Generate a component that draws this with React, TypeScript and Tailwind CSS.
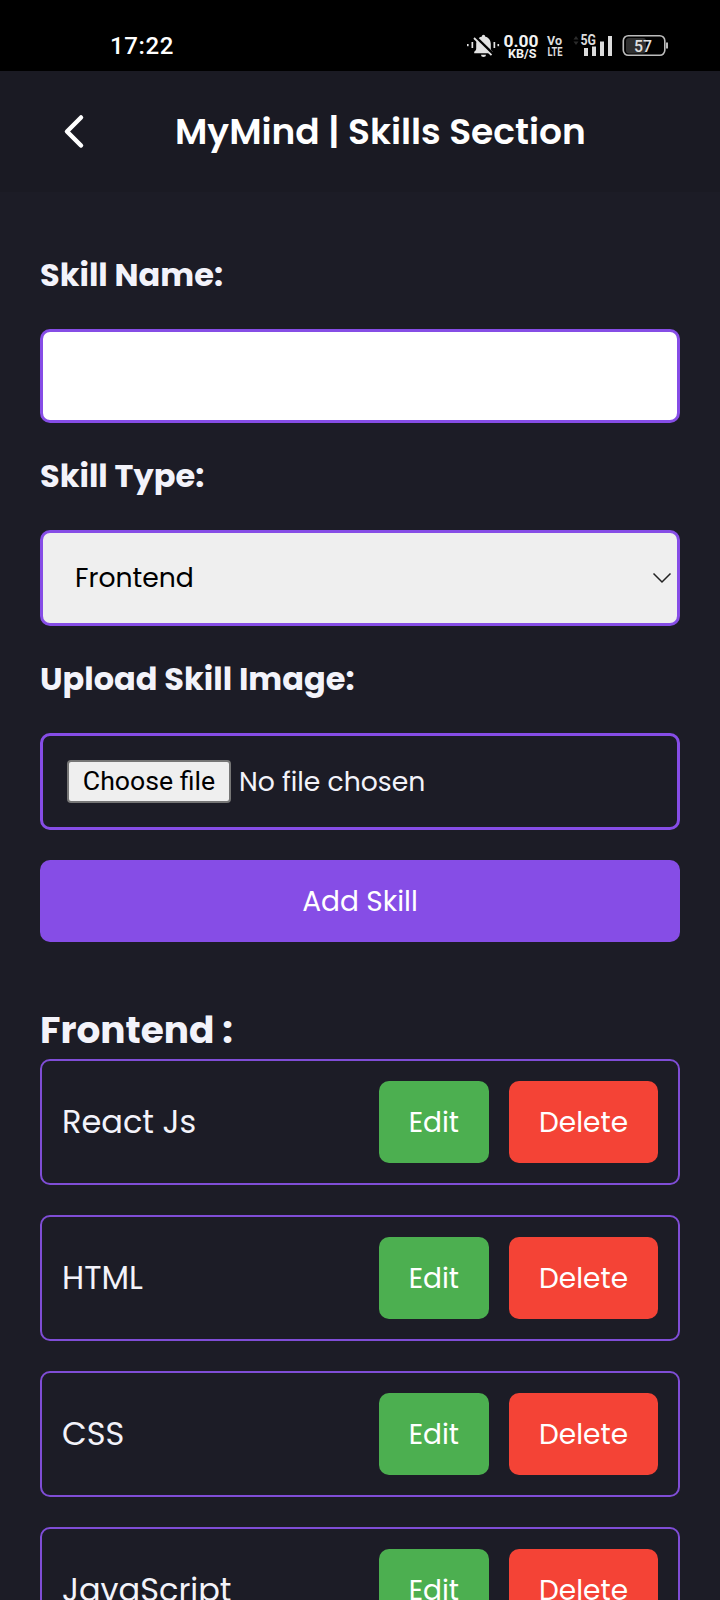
import React from "react";

const skills = ["React Js", "HTML", "CSS", "JavaScript"];

function StatusBar() {
  return (
    <header className="flex h-[71px] shrink-0 items-start justify-between bg-black pl-[110px] pr-[50px] pt-[33px] font-['Roboto',sans-serif]">
      <span className="text-[24px] font-medium leading-[26px] tracking-[0.6px] text-white">17:22</span>
      <svg width="208" height="30" viewBox="462 33 208 30" className="shrink-0 overflow-visible" fontFamily="Roboto, sans-serif">
        <g fill="#e2e2e2">
          <circle cx="483.5" cy="36.5" r="1.7" />
          <path d="M483.5 36.5c4.6 0 7.3 3.2 7.3 7.6v4.4c0 1.4.6 2.2 2 3.2v1.6h-18.6v-1.6c1.4-1 2-1.8 2-3.2v-4.4c0-4.4 2.7-7.6 7.3-7.6z" />
          <path d="M481 54.800h5a2.500 2.200 0 0 1-5 0z" />
          <rect x="471.500" y="42" width="1.700" height="6" />
          <rect x="467" y="44" width="1.600" height="2.200" />
          <rect x="493.500" y="42" width="1.700" height="6" />
          <rect x="497.500" y="44" width="1.600" height="2.200" />
        </g>
        <path d="M475.500 37.200l18 17.500" stroke="#000" strokeWidth="3" />
        <path d="M474 38l17.500 17.200" stroke="#e2e2e2" strokeWidth="1.800" />
        <text x="503.500" y="46.500" fontSize="17" fontWeight="700" fill="#f2f2f2" textLength="35" lengthAdjust="spacingAndGlyphs">0.00</text>
        <text x="508" y="57.500" fontSize="12.500" fontWeight="700" fill="#f2f2f2" textLength="28.500" lengthAdjust="spacingAndGlyphs">KB/S</text>
        <text x="547" y="45" fontSize="13" fontWeight="700" fill="#dcdcdc" textLength="15" lengthAdjust="spacingAndGlyphs">Vo</text>
        <text x="547.500" y="56" fontSize="13" fontWeight="700" fill="#dcdcdc" textLength="15" lengthAdjust="spacingAndGlyphs">LTE</text>
        <path d="M573.500 39.500l2.500-3.500 2.500 3.500zM573.500 41.500l2.500 3.500 2.500-3.500z" fill="#2c2c2c" />
        <text x="580.500" y="45.300" fontSize="14" fontWeight="700" fill="#dcdcdc" textLength="15.500" lengthAdjust="spacingAndGlyphs">5G</text>
        <g fill="#dcdcdc">
          <rect x="584" y="48" width="4" height="8" />
          <rect x="592" y="46.500" width="4" height="9.500" />
          <rect x="600" y="41.500" width="4" height="14.500" />
          <rect x="608" y="36" width="4" height="20" />
        </g>
        <rect x="626" y="38" width="20" height="15.500" rx="3" fill="#303030" />
        <rect x="623.300" y="35.700" width="41.500" height="19.600" rx="5" fill="none" stroke="#bdbdbd" strokeWidth="1.600" />
        <path d="M667 42.500v6" stroke="#bdbdbd" strokeWidth="2" />
        <text x="634" y="51.800" fontSize="17" fontWeight="500" fill="#e0e0e0" textLength="18" lengthAdjust="spacingAndGlyphs">57</text>
      </svg>
    </header>
  );
}

function Label({ children }: { children: React.ReactNode }) {
  return <label className="block h-[47px] text-[32px] font-bold leading-[46px]">{children}</label>;
}

function SkillCard({ name }: { name: string }) {
  return (
    <li className="flex h-[126px] shrink-0 items-center gap-5 rounded-[10px] border-2 border-[#7f4dd6] px-5">
      <span className="flex-1 text-[32px] leading-[48px]">{name}</span>
      <button className="h-[82px] rounded-[10px] bg-[#4caf50] px-[30px] pt-0.5 text-[28px] leading-[42px] text-white">Edit</button>
      <button className="h-[82px] rounded-[10px] bg-[#f44336] px-[30px] pt-0.5 text-[28px] leading-[42px] text-white">Delete</button>
    </li>
  );
}

export default function App() {
  return (
    <div className="flex h-[1600px] w-[720px] flex-col overflow-hidden bg-[#1c1c26] font-['Poppins','Inter',sans-serif] text-[#f3f3fa]">
      <StatusBar />
      <nav className="flex h-[121px] shrink-0 items-center bg-[#1a1a23] pl-[61px] text-white">
        <svg width="26" height="36" viewBox="0 0 26 36" fill="none" stroke="currentColor" strokeWidth="4.500" strokeLinecap="round" strokeLinejoin="round">
          <path d="M20 3.500L6 17.500L20 31.500" />
        </svg>
        <h1 className="ml-[88px] text-[36px] font-semibold leading-[54px]">MyMind | Skills Section</h1>
      </nav>
      <main className="flex flex-col px-10 pt-[60px]">
        <form className="flex flex-col">
          <Label>Skill Name:</Label>
          <input className="mt-[30px] h-[94px] rounded-[10px] border-3 border-[#864de6] bg-white px-5" />
          <div className="mt-[30px]">
            <Label>Skill Type:</Label>
          </div>
          <div className="mt-[30px] flex h-[96px] items-center justify-between rounded-[10px] border-3 border-[#864de6] bg-[#efefef] pl-8 pr-[5px] text-black">
            <span className="text-[26.67px] leading-[40px]">Frontend</span>
            <svg width="20" height="12" viewBox="0 0 20 12" fill="none" stroke="#222" strokeWidth="1.500">
              <path d="M1.500 1.500L10 10L18.500 1.500" />
            </svg>
          </div>
          <div className="mt-[30px]">
            <Label>Upload Skill Image:</Label>
          </div>
          <div className="mt-[30px] flex h-[97px] items-center rounded-[10px] border-3 border-[#864de6] pl-6">
            <button type="button" className="h-[43px] w-[164px] rounded-[4px] border-2 border-[#767676] bg-[#efefef] font-['Roboto',sans-serif] text-[26.67px] leading-[39px] text-black">
              Choose file
            </button>
            <span className="ml-2 text-[26.67px] leading-[40px]">No file chosen</span>
          </div>
          <button type="button" className="mt-[30px] h-[82px] rounded-[10px] bg-[#864de6] pt-0.5 text-[28px] leading-[42px] text-white">
            Add Skill
          </button>
        </form>
        <h2 className="mt-[60px] h-[57px] text-[37.44px] font-bold leading-[56px]">Frontend :</h2>
        <ul className="flex flex-col gap-[30px]">
          {skills.map((name) => (
            <SkillCard key={name} name={name} />
          ))}
        </ul>
      </main>
    </div>
  );
}
